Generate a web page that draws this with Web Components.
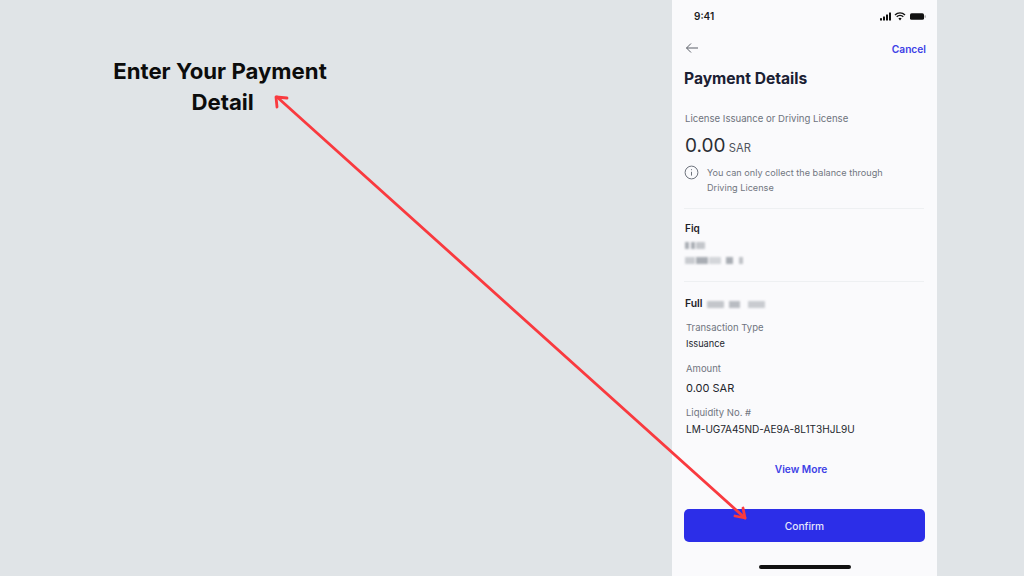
<!DOCTYPE html>
<html lang="en">
<head>
<meta charset="utf-8">
<title>Enter Your Payment Detail</title>
<style>
  html, body { margin: 0; height: 100%; background: #e0e4e7; }
  body { font-family: Inter, "Liberation Sans", sans-serif; overflow: hidden; }
</style>
</head>
<body>
<flow-slide>
  <span slot="caption">Enter Your Payment<br>&nbsp;Detail</span>
  <pay-screen slot="screen"></pay-screen>
</flow-slide>

<script>
// flow-slide: grey slide, caption on the left, phone screen on the right, arrow laid over both.
class FlowSlide extends HTMLElement {
  constructor() {
    super();
    this.attachShadow({ mode: "open" }).innerHTML = `<style>
      :host { display: flex; position: relative; width: 1024px; height: 576px; background: #e0e4e7; overflow: hidden; }
      .left { width: 672px; flex: none; box-sizing: border-box; padding: 55px 0 0 0; }
      .caption {
        width: 440px;
        text-align: center;
        font: 700 22.2px/31px Inter, "Liberation Sans", sans-serif;
        color: #0c0c0c;
      }
      .right { width: 265px; flex: none; }
      svg.arrow { position: absolute; left: 0; top: 0; pointer-events: none; }
    </style>
    <div class="left"><div class="caption"><slot name="caption"></slot></div></div>
    <div class="right"><slot name="screen"></slot></div>
    <svg class="arrow" width="1024" height="576" viewBox="0 0 1024 576" fill="none" stroke="#f93a3f" stroke-width="2.8" stroke-linecap="round" stroke-linejoin="round">
      <path d="M277 97L745 518"/>
      <path d="M277 107L276 97L287 98"/>
      <path d="M735 516L745 518L743 508"/>
    </svg>`;
  }
}

// status-row: the 9:41 bar with signal, wifi and battery glyphs.
class StatusRow extends HTMLElement {
  constructor() {
    super();
    this.attachShadow({ mode: "open" }).innerHTML = `<style>
      :host { display: flex; align-items: center; justify-content: space-between; height: 32px; padding: 0 10px 0 22px; }
      .time { font-size: 10px; font-weight: 600; color: #1c1c1e; }
      svg { display: block; }
    </style>
    <span class="time">9:41</span>
    <svg width="47" height="9" viewBox="0 0 47 9" fill="#111">
      <rect x="0" y="6" width="2" height="2.6" rx=".4"/>
      <rect x="3" y="4.4" width="2" height="4.2" rx=".4"/>
      <rect x="6" y="2.4" width="2" height="6.2" rx=".4"/>
      <rect x="9" y=".4" width="2" height="8.2" rx=".4"/>
      <path d="M15 2.9a7.2 7.2 0 0 1 10 0M16.7 4.8a4.7 4.7 0 0 1 6.6 0" fill="none" stroke="#111" stroke-width="1.4"/>
      <path d="M18.4 6.5a2.3 2.3 0 0 1 3.2 0L20 8.4z"/>
      <rect x="30" y="1.2" width="14" height="6.6" rx="1.6"/>
      <rect x="44.6" y="3.3" width="1" height="2.4" rx=".5" fill="#888"/>
    </svg>`;
  }
}

// detail-field: small grey label above a dark value. --value-size and --value-gap tune the value line.
class DetailField extends HTMLElement {
  static observedAttributes = ["label", "value"];
  constructor() {
    super();
    this.attachShadow({ mode: "open" }).innerHTML = `<style>
      :host { display: block; }
      .label { font-size: 9.5px; line-height: 14px; color: #70757f; }
      .value { font-size: var(--value-size, 9.7px); line-height: 14px; color: #23262c; margin-top: var(--value-gap, 3px); }
    </style>
    <div class="label"></div>
    <div class="value"></div>`;
  }
  connectedCallback() { this.#render(); }
  attributeChangedCallback() { this.#render(); }
  #render() {
    this.shadowRoot.querySelector(".label").textContent = this.getAttribute("label") ?? "";
    this.shadowRoot.querySelector(".value").textContent = this.getAttribute("value") ?? "";
  }
}

// redacted-bit: blurred smudge standing in for hidden account data.
class RedactedBit extends HTMLElement {
  constructor() {
    super();
    this.attachShadow({ mode: "open" }).innerHTML = `<style>
      :host { display: inline-block; height: 7px; width: var(--w, 12px); margin-right: var(--gap, 3px); background: var(--shade, #8f949c); filter: blur(1.1px); opacity: var(--op, .75); vertical-align: middle; }
    </style>`;
  }
}

// pay-screen: the phone screen itself.
class PayScreen extends HTMLElement {
  constructor() {
    super();
    this.attachShadow({ mode: "open" }).innerHTML = `<style>
      :host { display: flex; flex-direction: column; width: 265px; height: 576px; background: #fafafc; color: #23262c; }
      .nav { display: flex; align-items: center; justify-content: space-between; height: 32px; padding: 0 11px 0 13px; }
      .nav .link { margin-top: 2px; }
      .link { font-size: 10.2px; font-weight: 600; color: #3d3fe6; }
      h1 { margin: 3px 0 0 12px; font-size: 15.6px; line-height: 24px; font-weight: 700; color: #1b2033; }
      .body { padding: 0 13px 0 12px; }
      .sub { margin-top: 21px; font-size: 9.6px; line-height: 14px; color: #6e737d; margin-left: 1px; }
      .amount { margin: 6px 0 0 1px; line-height: 28px; font-size: 19px; color: #2b2e35; }
      .amount small { font-size: 11.2px; color: #50545c; margin-left: -2px; }
      .info { display: flex; gap: 8px; margin-top: 3px; font-size: 9.15px; line-height: 15px; color: #71767f; }
      .info svg { flex: none; margin: 0 0 0 0; }
      hr { border: 0; border-top: 1px solid #eef0f2; margin: 13px 0 0; }
      .name { font-size: 10px; line-height: 14px; font-weight: 600; color: #1f2228; }
      .fiq { margin: 12px 0 0 1px; }
      .blur { height: 15px; display: flex; align-items: center; margin-left: 1px; }
      .full { display: flex; align-items: center; margin: 15px 0 0 1px; }
      .full .name { margin-right: 4px; font-size: 10.4px; }
      .fields { margin: 10px 0 0 2px; display: flex; flex-direction: column; gap: 11px; }
      .more { text-align: center; margin-top: 26px; line-height: 14px; padding-right: 6px; }
      .cta {
        display: flex; align-items: center; justify-content: center;
        height: 33px; margin: 33px 12px 0 12px;
        background: #2c2ee8; border-radius: 5px;
        color: #e6e7fb; font-size: 10.2px; font-weight: 500;
      }
      .home { width: 92px; height: 4px; border-radius: 2px; background: #111; margin: 23px auto 0; }
    </style>
    <status-row></status-row>
    <div class="nav">
      <svg width="14" height="12" viewBox="0 0 14 12" fill="none" stroke="#5b5f68" stroke-width="1">
        <path d="M13 6H1.5M6 1.5L1.5 6L6 10.5"/>
      </svg>
      <span class="link">Cancel</span>
    </div>
    <h1>Payment Details</h1>
    <div class="body">
      <div class="sub">License Issuance or Driving License</div>
      <div class="amount">0.00 <small>SAR</small></div>
      <div class="info">
        <svg width="15" height="15" viewBox="0 0 15 15" fill="none" stroke="#6e737d" stroke-width="1">
          <circle cx="7.5" cy="7.5" r="6.4"/>
          <path d="M7.5 6.8V10.6M7.5 4.2V5.2"/>
        </svg>
        <span>You can only collect the balance through<br>Driving License</span>
      </div>
      <hr>
      <div class="fiq name">Fiq</div>
      <div class="blur" style="margin-top:3px">
        <redacted-bit style="--w:4px;--gap:2px"></redacted-bit><redacted-bit style="--w:4px;--gap:1px"></redacted-bit><redacted-bit style="--w:9px;--op:.5"></redacted-bit>
      </div>
      <div class="blur">
        <redacted-bit style="--w:10px;--gap:1px;--op:.45"></redacted-bit><redacted-bit style="--w:12px;--gap:1px"></redacted-bit><redacted-bit style="--w:12px;--gap:5px;--op:.35"></redacted-bit><redacted-bit style="--w:7px;--gap:6px"></redacted-bit><redacted-bit style="--w:4px;--gap:0;--op:.55"></redacted-bit>
      </div>
      <hr style="margin-top:13px">
      <div class="full">
        <span class="name">Full</span>
        <redacted-bit style="--w:17px;--gap:5px;--op:.5"></redacted-bit><redacted-bit style="--w:11px;--gap:8px;--op:.6"></redacted-bit><redacted-bit style="--w:17px;--gap:0;--op:.45"></redacted-bit>
      </div>
      <div class="fields">
        <detail-field label="Transaction Type" value="Issuance" style="--value-size:9.2px;--value-gap:2px"></detail-field>
        <detail-field label="Amount" value="0.00 SAR" style="--value-size:11px;--value-gap:5px"></detail-field>
        <detail-field label="Liquidity No. #" value="LM-UG7A45ND-AE9A-8L1T3HJL9U" style="--value-size:10.05px;--value-gap:2px"></detail-field>
      </div>
      <div class="more link">View More</div>
    </div>
    <div class="cta">Confirm</div>
    <div class="home"></div>`;
  }
}

customElements.define("status-row", StatusRow);
customElements.define("detail-field", DetailField);
customElements.define("redacted-bit", RedactedBit);
customElements.define("pay-screen", PayScreen);
customElements.define("flow-slide", FlowSlide);
</script>
</body>
</html>
